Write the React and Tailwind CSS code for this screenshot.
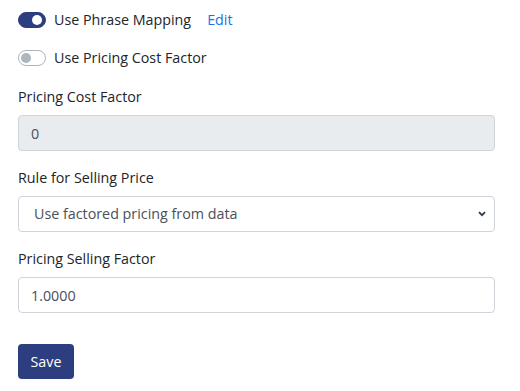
import { useState } from 'react'

function Switch({ on, onToggle, label, children }) {
  return (
    <div className="flex h-[22px] items-center">
      <button
        type="button"
        onClick={onToggle}
        className={
          on
            ? 'relative h-4 w-7 shrink-0 rounded-full border border-[#2c3e80] bg-[#2c3e80]'
            : 'relative h-4 w-7 shrink-0 rounded-full border border-[#adb5bd] bg-white'
        }
        aria-pressed={on}
      >
        <span
          className={
            on
              ? 'absolute top-[2px] left-[13px] h-[10px] w-[10px] rounded-full bg-white'
              : 'absolute top-[2px] left-[2px] h-[10px] w-[10px] rounded-full bg-[#adb5bd]'
          }
        />
      </button>
      <span className="ml-[8px] text-[#212529]">{label}</span>
      {children}
    </div>
  )
}

function Field({ label, children }) {
  return (
    <div className="mb-4">
      <label className="mb-2 block leading-[21px] text-[#212529]">{label}</label>
      {children}
    </div>
  )
}

export default function App() {
  const [phrase, setPhrase] = useState(true)
  const [costOn, setCostOn] = useState(false)
  const [rule, setRule] = useState('factored')
  const [selling, setSelling] = useState('1.0000')

  return (
    <div
      className="min-h-screen bg-white pl-[18px] pr-[25px] pt-[9px] text-[14.3px]"
      style={{ fontFamily: '"Open Sans", "Noto Sans", Arial, sans-serif' }}
    >
      <div className="mb-4">
        <Switch on={phrase} onToggle={() => setPhrase(!phrase)} label="Use Phrase Mapping">
          <a href="#" className="ml-[16px] text-[#1a73e8]">
            Edit
          </a>
        </Switch>
      </div>
      <div className="mb-[17px]">
        <Switch on={costOn} onToggle={() => setCostOn(!costOn)} label="Use Pricing Cost Factor" />
      </div>

      <Field label="Pricing Cost Factor">
        <input
          type="text"
          value="0"
          disabled
          readOnly
          className="block h-[36px] w-full rounded-[4px] border border-[#ced4da] bg-[#e9ecef] px-3 text-[14.3px] text-[#495057] outline-none"
        />
      </Field>

      <Field label="Rule for Selling Price">
        <div className="relative">
          <select
            value={rule}
            onChange={(e) => setRule(e.target.value)}
            className="block h-[36px] w-full appearance-none rounded-[4px] border border-[#ced4da] bg-white pl-[15px] pr-8 text-[14.3px] text-[#495057] outline-none"
          >
            <option value="factored">Use factored pricing from data</option>
            <option value="cost">Use cost factor</option>
          </select>
          <svg
            className="pointer-events-none absolute right-[9px] top-[15px]"
            width="8"
            height="6"
            viewBox="0 0 8 6"
          >
            <path d="M1 1.2 L4 4.2 L7 1.2" fill="none" stroke="#343a40" strokeWidth="1.8" />
          </svg>
        </div>
      </Field>

      <Field label="Pricing Selling Factor">
        <input
          type="text"
          value={selling}
          onChange={(e) => setSelling(e.target.value)}
          className="block h-[36px] w-full rounded-[4px] border border-[#ced4da] bg-white px-3 text-[14.3px] text-[#495057] outline-none"
        />
      </Field>

      <button
        type="button"
        className="mt-[15px] h-[35px] w-[56px] rounded-[4px] bg-[#2c3e80] text-[14.3px] text-white"
      >
        Save
      </button>
    </div>
  )
}
